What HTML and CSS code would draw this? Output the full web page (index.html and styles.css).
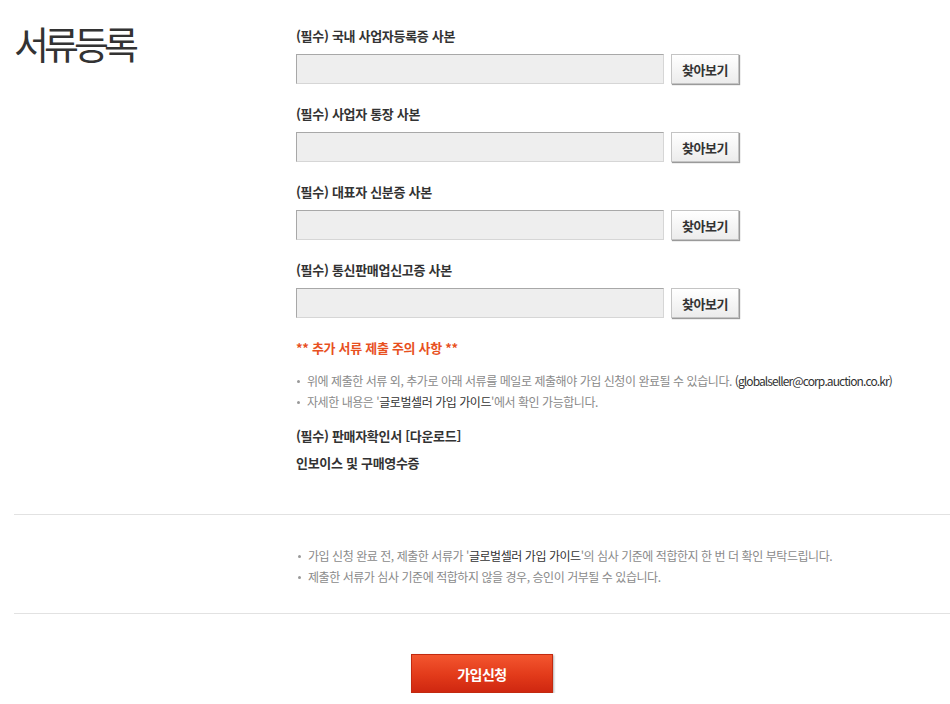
FILE: index.html
```html
<!DOCTYPE html>
<html lang="ko">
<head>
<meta charset="utf-8">
<link rel="stylesheet" href="styles.css">
</head>
<body>
<div class="page">
  <section class="docs">
    <h1 class="title">서류등록</h1>
    <div class="form">
      <div class="field">
        <div class="label">(필수) 국내 사업자등록증 사본</div>
        <div class="file-row"><div class="file-input"></div><button class="btn-find">찾아보기</button></div>
      </div>
      <div class="field">
        <div class="label">(필수) 사업자 통장 사본</div>
        <div class="file-row"><div class="file-input"></div><button class="btn-find">찾아보기</button></div>
      </div>
      <div class="field">
        <div class="label">(필수) 대표자 신분증 사본</div>
        <div class="file-row"><div class="file-input"></div><button class="btn-find">찾아보기</button></div>
      </div>
      <div class="field">
        <div class="label">(필수) 통신판매업신고증 사본</div>
        <div class="file-row"><div class="file-input"></div><button class="btn-find">찾아보기</button></div>
      </div>
      <div class="notice-title">** 추가 서류 제출 주의 사항 **</div>
      <ul class="bullets">
        <li>위에 제출한 서류 외, 추가로 아래 서류를 메일로 제출해야 가입 신청이 완료될 수 있습니다. <span class="dark email">(globalseller@corp.auction.co.kr)</span></li>
        <li>자세한 내용은 '<span class="dark">글로벌셀러 가입 가이드</span>'에서 확인 가능합니다.</li>
      </ul>
      <div class="extra">(필수) 판매자확인서 [다운로드]</div>
      <div class="extra">인보이스 및 구매영수증</div>
    </div>
  </section>
  <section class="confirm">
    <ul class="bullets">
      <li>가입 신청 완료 전, 제출한 서류가 '<span class="dark">글로벌셀러 가입 가이드</span>'의 심사 기준에 적합한지 한 번 더 확인 부탁드립니다.</li>
      <li>제출한 서류가 심사 기준에 적합하지 않을 경우, 승인이 거부될 수 있습니다.</li>
    </ul>
  </section>
  <div class="actions">
    <button class="btn-submit">가입신청</button>
  </div>
</div>
</body>
</html>
```
FILE: styles.css
```css
html, body {
  margin: 0;
  padding: 0;
  background: #fff;
}
body {
  font-family: "Noto Sans CJK KR", "Noto Sans", sans-serif;
  color: #333;
}
.page {
  width: 950px;
}
.docs {
  display: flex;
  margin-left: 14px;
  padding-top: 27px;
  padding-bottom: 33px;
  border-bottom: 1px solid #e2e2e2;
}
.title {
  margin: -7px 0 0 0;
  width: 282px;
  flex: none;
  font-size: 38px;
  font-weight: 400;
  letter-spacing: -5px;
  line-height: 46px;
  color: #333;
}
.form {
  flex: 1;
}
.field {
  margin-bottom: 21px;
}
.label, .extra, .notice-title {
  font-size: 13px;
  line-height: 18px;
  font-weight: 700;
  letter-spacing: -0.3px;
  color: #333;
}
.label {
  margin-bottom: 9px;
}
.file-row {
  display: flex;
  gap: 7px;
  align-items: flex-start;
}
.file-input {
  width: 366px;
  height: 28px;
  background: #eeeeee;
  border: 1px solid #d6d6d6;
  border-top-color: #a8a8a8;
  border-left-color: #a8a8a8;
}
.btn-find {
  width: 68px;
  height: 30px;
  margin: 0;
  padding: 0;
  font-family: inherit;
  font-size: 13px;
  font-weight: 700;
  letter-spacing: -0.5px;
  color: #333;
  background: linear-gradient(#ffffff, #ececec);
  border: 1px solid #c4c4c4;
  box-shadow: 1px 1px 1px #9a9a9a;
}
.notice-title {
  color: #e8511f;
  margin-bottom: 13px;
}
.bullets {
  list-style: none;
  margin: 0;
  padding: 0;
}
.bullets li {
  position: relative;
  padding-left: 11px;
  font-size: 12px;
  line-height: 21px;
  letter-spacing: -0.45px;
  color: #8a8a8a;
}
.bullets li::before {
  content: "";
  position: absolute;
  left: 1px;
  top: 10px;
  width: 3px;
  height: 3px;
  border-radius: 50%;
  background: #999;
}
.dark {
  color: #333;
}
.email {
  letter-spacing: -0.9px;
}
.docs .bullets {
  margin-bottom: 15px;
}
.extra {
  line-height: 18px;
  margin-bottom: 9px;
}
.confirm {
  margin-left: 14px;
  padding: 30px 0 26px 283px;
  border-bottom: 1px solid #e2e2e2;
}
.actions {
  display: flex;
  padding-top: 40px;
  padding-left: 411px;
}
.btn-submit {
  width: 142px;
  height: 39px;
  margin: 0;
  padding: 0;
  font-family: inherit;
  font-size: 14px;
  font-weight: 700;
  letter-spacing: -0.5px;
  color: #fff;
  background: linear-gradient(#f3562f, #e23a1a 55%, #cf2710);
  border: 1px solid #c22a10;
  box-shadow: 1px 1px 2px #b0b0b0;
}
```
